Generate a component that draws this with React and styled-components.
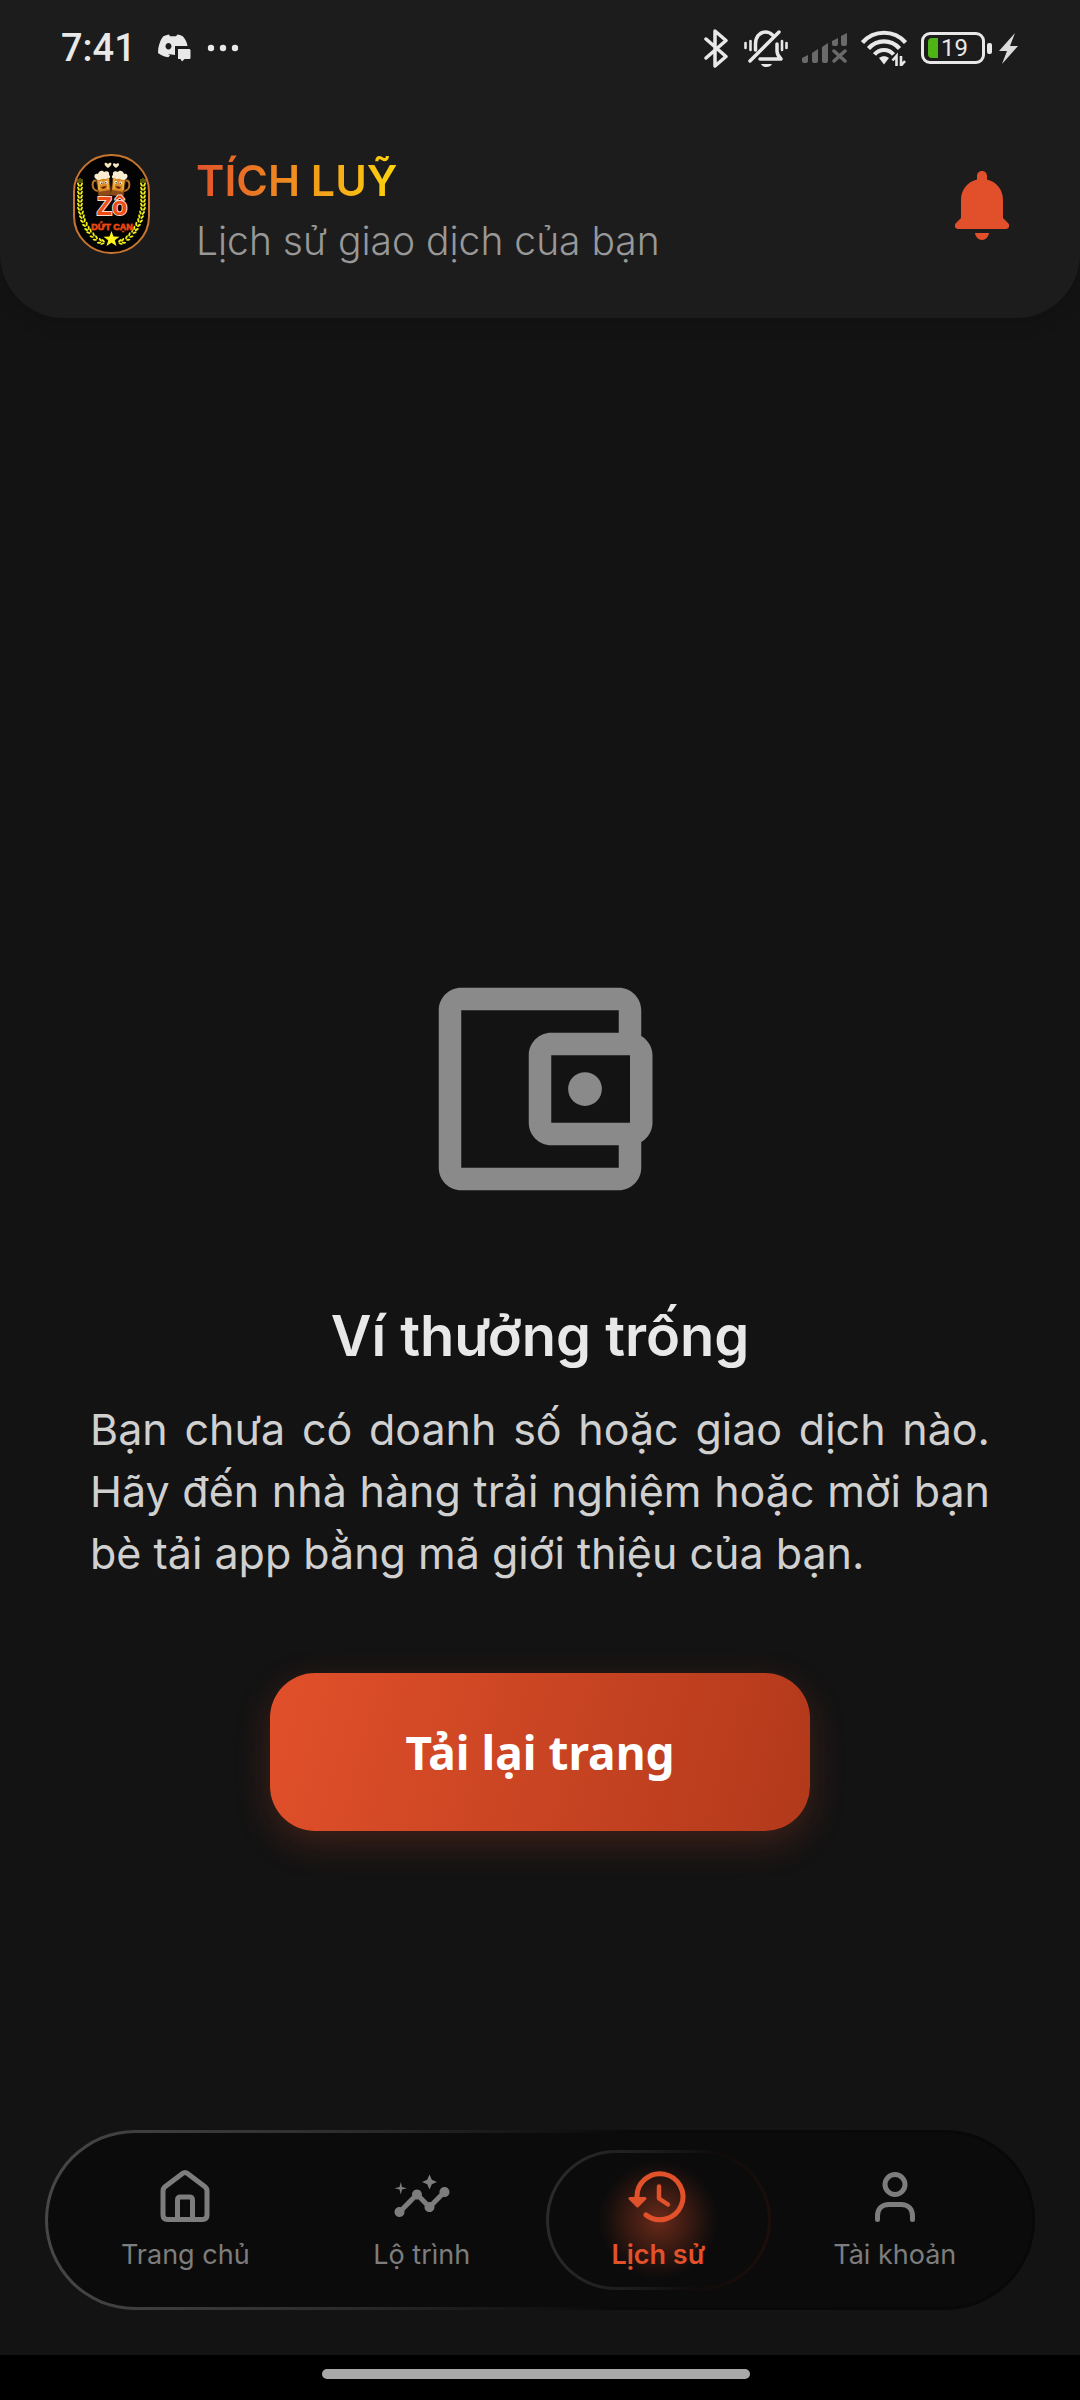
import React, { useState } from 'react'
import styled, { createGlobalStyle } from 'styled-components'

const GlobalStyle = createGlobalStyle`
  * {
    box-sizing: border-box;
  }
  body {
    margin: 0;
    background: #131313;
    font-family: Inter, 'Noto Sans', sans-serif;
  }
  button {
    border: 0;
    padding: 0;
    background: none;
    font: inherit;
    cursor: pointer;
  }
  svg {
    display: block;
    flex: none;
  }
`

const Page = styled.div`
  min-height: 100vh;
  display: flex;
  flex-direction: column;
  background: #131313;
`
const Top = styled.header`
  background: #1c1c1c;
  border-radius: 0 0 64px 64px;
  box-shadow: 0 6px 18px rgba(0, 0, 0, 0.12);
`
const StatusBar = styled.div`
  height: 96px;
  padding: 0 62px 0 61px;
  display: flex;
  align-items: center;
  justify-content: space-between;
  color: #e8e8e8;
  font-family: Roboto, sans-serif;
`
const StatusGroup = styled.div`
  display: flex;
  align-items: center;
  gap: ${(props) => props.$gap}px;
`
const Clock = styled.span`
  font-size: 38px;
  line-height: 50px;
  font-weight: 500;
  margin-right: 6px;
`
const Battery = styled.div`
  display: flex;
  align-items: center;
  gap: 2px;
  &::after {
    content: '';
    width: 5px;
    height: 11px;
    border-radius: 2px;
    background: #e8e8e8;
  }
`
const BatteryBody = styled.div`
  width: 64px;
  height: 32px;
  padding: 0 4px;
  display: flex;
  align-items: center;
  gap: 3px;
  border: 3px solid #e8e8e8;
  border-radius: 9px;
  font-size: 24px;
  line-height: 24px;
`
const BatteryLevel = styled.div`
  width: 10px;
  height: 20px;
  border-radius: 4px 0 0 4px;
  background: #4fb415;
`
const HeaderRow = styled.div`
  padding: 58px 71px 48px 73px;
  display: flex;
  align-items: flex-start;
`
const Titles = styled.div`
  flex: 1;
  margin-left: 46px;
`
const Title = styled.h1`
  width: fit-content;
  margin: 0 0 6px;
  font-size: 43px;
  line-height: 52px;
  font-weight: 600;
  color: transparent;
  background: linear-gradient(90deg, #e1522b, #f0921e 50%, #fdd40c);
  background-clip: text;
`
const Subtitle = styled.p`
  margin: 0;
  font-size: 39px;
  line-height: 58px;
  font-weight: 300;
  color: #989898;
`
const BellButton = styled.button`
  height: 103px;
  display: flex;
  align-items: center;
`
const Main = styled.main`
  flex: 1;
  padding: 337px 90px 0;
  display: flex;
  flex-direction: column;
  align-items: center;
  justify-content: center;
`
const EmptyTitle = styled.h2`
  margin: 76px 0 26px;
  font-size: 56px;
  line-height: 72px;
  font-weight: 600;
  color: #e8e8e8;
`
const EmptyText = styled.p`
  margin: 0 0 89px;
  font-size: 43px;
  line-height: 62px;
  text-align: justify;
  color: #d0d0d0;
`
const ReloadButton = styled.button`
  width: 60%;
  height: 158px;
  border-radius: 45px;
  color: #fff;
  font-family: 'Noto Sans', sans-serif;
  font-size: 46px;
  font-weight: 700;
  background: linear-gradient(105deg, #e1502a, #b2391b);
  box-shadow: 0 12px 36px rgba(225, 80, 42, 0.22);
`
const NavBar = styled.nav`
  height: 180px;
  margin: 0 45px 45px;
  padding: 17px 19px;
  display: flex;
  border: 3px solid transparent;
  border-radius: 90px;
  background:
    linear-gradient(#0b0b0b, #0b0b0b) padding-box,
    linear-gradient(95deg, #484848, #2c2c2c 30%, #090909 58%, #080808) border-box;
`
const NavItem = styled.a`
  flex: 1;
  margin: 0 6px;
  display: flex;
  flex-direction: column;
  align-items: center;
  justify-content: center;
  gap: 10px;
  border: 3px solid transparent;
  border-radius: 70px;
  text-decoration: none;
  font-size: 27px;
  line-height: 36px;
  white-space: nowrap;
  font-weight: ${(props) => (props.$active ? 600 : 400)};
  color: ${(props) => (props.$active ? '#e1522b' : '#7d7d7d')};
  background: ${(props) =>
    props.$active
      ? `radial-gradient(circle 60px, rgba(225, 80, 42, 0.44), rgba(225, 80, 42, 0.22) 50%, rgba(225, 80, 42, 0.05) 85%, rgba(225, 80, 42, 0)) padding-box,
    linear-gradient(#0b0b0b, #0b0b0b) padding-box,
    linear-gradient(100deg, #2c2c2c, #1c1c1c 45%, #0f0b0a 70%, #1e0f0b) border-box`
      : 'none'};
`
const GestureArea = styled.div`
  height: 45px;
  padding: 14px 8px 0 0;
  background: #000;
`
const GestureBar = styled.div`
  width: 40%;
  height: 10px;
  margin: 0 auto;
  border-radius: 5px;
  background: #a8a8a8;
`

// left branch of the wreath, the right one is its mirror
const LEAVES = [
  [7, 30, 90], [7, 34, 90], [7, 38, 90], [7, 42, 90], [7, 46, 90], [7, 50, 90],
  [7, 54, 88], [8, 58, 82], [9, 62, 76], [10, 66, 70], [12, 70, 62], [14, 74, 56],
  [16, 77, 50], [19, 81, 42], [22, 84, 34], [26, 87, 24], [29, 88, 14],
]

const Wreath = () => (
  <g fill='#f2f216'>
    <path d='M5 25v5M7 24v5M9 25v5' stroke='#f2f216' strokeWidth='0.7' />
    {LEAVES.map(([x, y, turn]) => (
      <g key={y} transform={`translate(${x} ${y}) rotate(${turn})`}>
        <ellipse cx='0' cy='-1.7' rx='2.2' ry='1' transform='rotate(28)' />
        <ellipse cx='0' cy='1.7' rx='2.2' ry='1' transform='rotate(-28)' />
      </g>
    ))}
  </g>
)

const Mug = () => (
  <g>
    <path d='M5 12C-1 9-1 22 6 22' fill='none' stroke='#b9742a' strokeWidth='2' />
    <path d='M4 9L17 7L19 26L7 27Z' fill='#d98a26' stroke='#5b2c0c' strokeWidth='0.8' />
    <path d='M6 23L18 21L19 26L7 27Z' fill='#8d4a17' />
    <path d='M7 12v9M16 10v10' stroke='#f5c14d' strokeWidth='1.2' />
    <circle cx='9.5' cy='14' r='1.4' fill='#fff' />
    <circle cx='14' cy='13.5' r='1.4' fill='#fff' />
    <circle cx='9.8' cy='14.2' r='0.7' fill='#221105' />
    <circle cx='13.8' cy='13.7' r='0.7' fill='#221105' />
    <path d='M9 18c2 3 4 2 5.500-1z' fill='#5b1a08' />
    <path d='M3 9c-2-4 2-5 3-4 1-4 5-4 6-2 3-2 6 0 5 3 2 1 1 4-1 3-3 2-5 0-6 1-3 2-5 1-7-1z' fill='#f9ecd0' />
  </g>
)

const Logo = () => (
  <svg width='77' height='100' viewBox='0 0 77 100' role='img' aria-label='Zô Dứt Cạn'>
    <rect x='1' y='1' width='75' height='98' rx='37' fill='#030303' stroke='#c8742f' strokeWidth='2' />
    <path d='M35 14c-6-4-3-7 0-4 3-3 6 0 0 4zM43 14c-5-3-3-6 0-4 3-2 5 1 0 4z' fill='#f8e7bd' />
    <g transform='translate(19 15)'>
      <Mug />
    </g>
    <g transform='translate(57 15) scale(-1 1)'>
      <Mug />
    </g>
    <Wreath />
    <g transform='translate(77 0) scale(-1 1)'>
      <Wreath />
    </g>
    <g
      fill='#f04a14'
      textAnchor='middle'
      fontFamily='Liberation Sans, sans-serif'
      fontWeight='700'
      paintOrder='stroke'
    >
      <text x='39' y='61' fontSize='25' stroke='#f7d9c8' strokeWidth='2'>Zô</text>
      <text x='39' y='76' fontSize='9' stroke='#a8300c' strokeWidth='1'>DỨT CẠN</text>
    </g>
    <path d='M38.500 77l2 5.500 6 .2-4.700 3.600 1.700 5.700-5-3.300-5 3.300 1.700-5.700-4.700-3.600 6-.2z' fill='#fdf51c' />
  </svg>
)

const BellIcon = () => (
  <svg width='54' height='70' viewBox='0 0 54 70' fill='#e1502a'>
    <path d='M27 0c3 0 5 2.200 5 5v3.500C42 11 48 19 48 29v18l5 5c2.500 2.500 1 6-2 6H3c-3 0-4.500-3.500-2-6l5-5V29C6 19 12 11 22 8.500V5c0-2.800 2-5 5-5z' />
    <path d='M20 62h14c-.6 4-3.400 7-7 7s-6.400-3-7-7z' />
  </svg>
)

const WalletIcon = () => (
  <svg width='270' height='270' viewBox='0 0 24 24' fill='#8a8a8a'>
    <path d='M21 7.280V5c0-1.100-.9-2-2-2H5c-1.110 0-2 .9-2 2v14c0 1.100.89 2 2 2h14c1.100 0 2-.9 2-2v-2.280c.59-.35 1-.98 1-1.720V9c0-.74-.41-1.370-1-1.720zM20 9v6h-7V9h7zM5 19V5h14v2h-6c-1.100 0-2 .9-2 2v6c0 1.100.9 2 2 2h6v2H5z' />
    <circle cx='16' cy='12' r='1.5' />
  </svg>
)

const LineIcon = ({ children }) => (
  <svg
    width='60'
    height='60'
    viewBox='0 0 60 60'
    fill='none'
    stroke='currentColor'
    strokeWidth='5'
    strokeLinecap='round'
    strokeLinejoin='round'
  >
    {children}
  </svg>
)

const HomeIcon = () => (
  <LineIcon>
    <path d='M8 24c0-2 .6-3 2-4.300L27.500 6.500c1.700-1.300 3.300-1.300 5 0L50 19.700c1.400 1.300 2 2.300 2 4.300v24c0 3-1.500 4.500-4.500 4.500h-35C9.500 52.500 8 51 8 48z' />
    <path d='M22.500 51V33c0-2 1-3 3-3h9c2 0 3 1 3 3v18' />
  </LineIcon>
)

const RouteIcon = () => (
  <svg width='60' height='60' viewBox='0 0 24 24' fill='currentColor'>
    <path d='M21 8c-1.450 0-2.260 1.440-1.930 2.510l-3.550 3.560c-.3-.09-.74-.09-1.040 0l-2.550-2.550C12.270 10.450 11.460 9 10 9c-1.450 0-2.270 1.440-1.930 2.520l-4.560 4.550C2.440 15.740 1 16.550 1 18c0 1.100.9 2 2 2 1.450 0 2.260-1.440 1.930-2.510l4.550-4.560c.3.09.74.09 1.040 0l2.550 2.550C12.730 16.550 13.540 18 15 18c1.450 0 2.270-1.440 1.930-2.520l3.560-3.550C21.560 12.260 23 11.450 23 10c0-1.100-.9-2-2-2z' />
    <path d='M15 9l.94-2.070L18 6l-2.060-.93L15 3l-.92 2.070L12 6l2.080.93zM3.500 11L4 9l2-.5L4 8l-.5-2L3 8l-2 .5L3 9z' />
  </svg>
)

const HistoryIcon = () => (
  <LineIcon>
    <path d='M9 31a23 23 0 1 1 9 17' />
    <path d='M2 31.500h15L9.500 39z' fill='currentColor' strokeWidth='3' />
    <path d='M31 19.500v12l9 6' strokeWidth='4.5' />
  </LineIcon>
)

const UserIcon = () => (
  <LineIcon>
    <circle cx='30' cy='17.5' r='10' />
    <path d='M12.500 52.500V49c0-7 4.500-11.500 11.500-11.500h12c7 0 11.500 4.500 11.500 11.500v3.500' />
  </LineIcon>
)

const DiscordIcon = () => (
  <svg width='33' height='28' viewBox='0 0 33 28' fill='currentColor'>
    <path
      fillRule='evenodd'
      d='M5 2.500C7 1.300 9 .6 11 .4l1 1.800h6L19.500.4c2 .2 4 .9 5.500 2 2.500 3 4 6 4.500 9.600H17v9l-7-1 2 1.300-1.500 2C6 22.500 3 21.500 0 19 0 13 1.500 7.500 5 2.500zM10.500 9c-1.700 0-3 1.500-3 3.300s1.300 3.200 3 3.200 3-1.400 3-3.200-1.300-3.300-3-3.300z'
    />
    <path d='M20 15h11c1 0 1.500.6 1.500 1.500v7c0 1-.5 1.500-1.500 1.500h-4.500L24 27.500 22.500 25H20z' />
  </svg>
)

const MoreIcon = () => (
  <svg width='32' height='8' viewBox='0 0 32 8' fill='currentColor'>
    <circle cx='4' cy='4' r='3.2' />
    <circle cx='16' cy='4' r='3.2' />
    <circle cx='28' cy='4' r='3.2' />
  </svg>
)

const BluetoothIcon = () => (
  <svg width='26' height='39' viewBox='0 0 26 39' fill='none' stroke='currentColor' strokeWidth='3.5' strokeLinejoin='round' strokeLinecap='round'>
    <path d='M2 10l20 17.500L11 37V2l11 9.500L2 29' />
  </svg>
)

const MutedBellIcon = () => (
  <svg width='44' height='39' viewBox='0 0 44 39' fill='none' stroke='currentColor' strokeWidth='3.5' strokeLinecap='round' strokeLinejoin='round'>
    <path d='M11.500 21v-6c0-7 4-12 10-12 3 0 5 1 7 3' />
    <path d='M33 15v7c0 3 1 5 4 8H16' />
    <path d='M6 32L35 3' />
    <path d='M17 35h11c-1.500 4-9.500 4-11 0z' fill='currentColor' stroke='none' />
    <path d='M1.500 14v5M6.500 12v9M38 12v9M42.500 14v5' strokeWidth='2.6' />
  </svg>
)

const SignalIcon = () => (
  <svg width='45' height='30' viewBox='0 0 45 30' fill='#6a6a6a'>
    <path d='M0 25l6-3v6a2 2 0 0 1-2 2H2a2 2 0 0 1-2-2zM10 20l6-4v12a2 2 0 0 1-2 2h-2a2 2 0 0 1-2-2zM20 14l6-4v18a2 2 0 0 1-2 2h-2a2 2 0 0 1-2-2zM30 8l6-3v6a2 2 0 0 1-2 2h-2a2 2 0 0 1-2-2zM39 3l6-3v11a2 2 0 0 1-2 2h-2a2 2 0 0 1-2-2z' />
    <path d='M32 18l11 10M43 18L32 28' stroke='#6a6a6a' strokeWidth='3.5' strokeLinecap='round' />
  </svg>
)

const WifiIcon = () => (
  <svg width='46' height='36' viewBox='0 0 46 36' fill='none' stroke='currentColor' strokeWidth='4.2'>
    <path d='M1.500 12.500C13-.5 33-.5 44.500 12.500' />
    <path d='M7.500 18.500c8.500-9.500 22.500-9.500 31 0' />
    <path d='M13.500 24.500c5-6 14-6 19 0' />
    <path d='M18 28c3-2.500 7-2.500 10 0l-5 6.500z' fill='currentColor' stroke='none' />
    <path d='M35.500 36V26l-4 4.500M40 26v9.500l4-4.500' strokeWidth='2.6' />
  </svg>
)

const BoltIcon = () => (
  <svg width='19' height='31' viewBox='0 0 19 31' fill='#dcdcdc'>
    <path d='M16 0L0 18h8L3 31 19 13h-8z' />
  </svg>
)

const TABS = [
  { id: 'home', label: 'Trang chủ', Icon: HomeIcon },
  { id: 'route', label: 'Lộ trình', Icon: RouteIcon },
  { id: 'history', label: 'Lịch sử', Icon: HistoryIcon },
  { id: 'account', label: 'Tài khoản', Icon: UserIcon },
]

const App = () => {
  const [tab, setTab] = useState('history')

  return (
    <Page>
      <GlobalStyle />
      <Top>
        <StatusBar>
          <StatusGroup $gap={16}>
            <Clock>7:41</Clock>
            <DiscordIcon />
            <MoreIcon />
          </StatusGroup>
          <StatusGroup $gap={14}>
            <BluetoothIcon />
            <MutedBellIcon />
            <SignalIcon />
            <WifiIcon />
            <StatusGroup $gap={7}>
              <Battery>
                <BatteryBody>
                  <BatteryLevel />
                  19
                </BatteryBody>
              </Battery>
              <BoltIcon />
            </StatusGroup>
          </StatusGroup>
        </StatusBar>

        <HeaderRow>
          <Logo />
          <Titles>
            <Title>TÍCH LUỸ</Title>
            <Subtitle>Lịch sử giao dịch của bạn</Subtitle>
          </Titles>
          <BellButton aria-label='Thông báo'>
            <BellIcon />
          </BellButton>
        </HeaderRow>
      </Top>

      <Main>
        <WalletIcon />
        <EmptyTitle>Ví thưởng trống</EmptyTitle>
        <EmptyText>
          Bạn chưa có doanh số hoặc giao dịch nào. Hãy đến nhà hàng trải nghiệm
          hoặc mời bạn bè tải app bằng mã giới thiệu của bạn.
        </EmptyText>
        <ReloadButton>Tải lại trang</ReloadButton>
      </Main>

      <NavBar>
        {TABS.map(({ id, label, Icon }) => (
          <NavItem
            key={id}
            href={`#${id}`}
            $active={tab === id}
            onClick={() => setTab(id)}
          >
            <Icon />
            {label}
          </NavItem>
        ))}
      </NavBar>
      <GestureArea>
        <GestureBar />
      </GestureArea>
    </Page>
  )
}

export default App
